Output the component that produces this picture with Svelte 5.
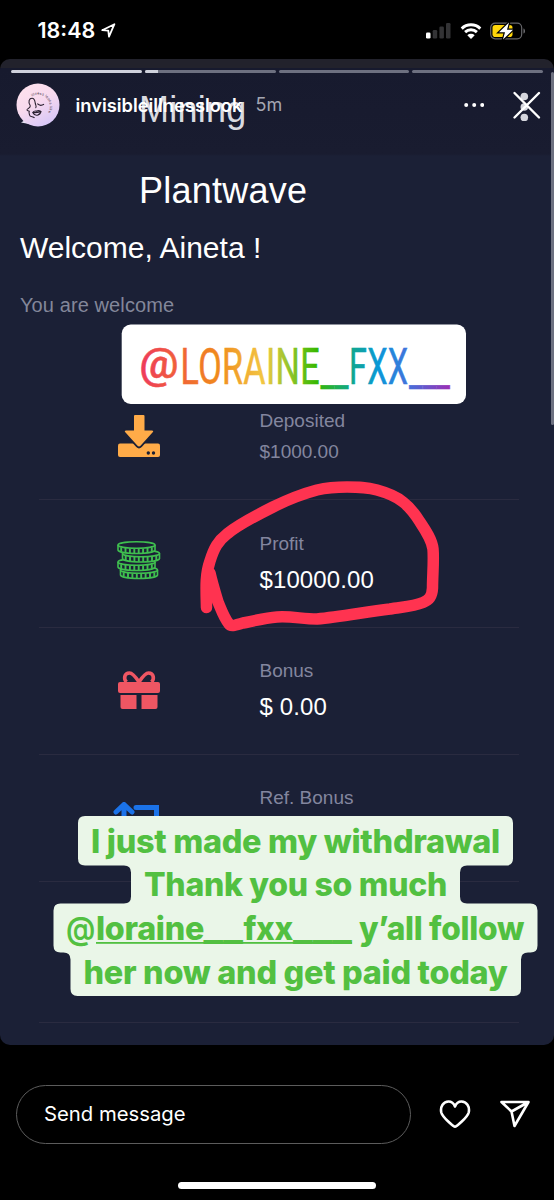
<script lang="ts">
    type Row = {
        icon: "deposit" | "coins" | "gift" | "referral" | "";
        label: string;
        amount: string;
        muted?: boolean;
    };

    const rows: Row[] = [
        { icon: "deposit", label: "Deposited", amount: "$1000.00", muted: true },
        { icon: "coins", label: "Profit", amount: "$10000.00" },
        { icon: "gift", label: "Bonus", amount: "$ 0.00" },
        { icon: "referral", label: "Ref. Bonus", amount: "" },
        { icon: "", label: "", amount: "" },
    ];

    const segments = [100, 10, 0, 0];

    // Bottom to top, each coin slightly shifted
    const stack = [
        { x: 3.5, y: 30 },
        { x: 1, y: 22 },
        { x: 5.5, y: 13.5 },
        { x: 1, y: 5 },
    ];

    const caption = [
        { text: "I just made my withdrawal", x: 91, y: 794, width: 409 },
        { text: "Thank you so much", x: 144, y: 837, width: 303 },
        { text: "her now and get paid today", x: 83.5, y: 924.5, width: 424 },
    ];
</script>

<div class="phone">
    <div class="status">
        <span class="time">18:48</span>
        <svg class="location" viewBox="0 0 15 15" width="15" height="15">
            <path d="M1.2 7.2 13.4 1.2 8 13.6 7.3 7.7Z" />
        </svg>
        <svg class="signal" viewBox="0 0 25 17" width="25" height="17">
            <rect x="0" y="10.5" width="4.5" height="6" rx="1.3" fill="#fff" />
            <rect x="6.7" y="8" width="4.5" height="8.5" rx="1.3" />
            <rect x="13.4" y="4.5" width="4.5" height="12" rx="1.3" />
            <rect x="20" y="1" width="4.5" height="15.5" rx="1.3" />
        </svg>
        <svg class="wifi" viewBox="0 0 22 16" width="22" height="16">
            <path d="M1.7 5.6A13.3 13.3 0 0 1 20.3 5.6" />
            <path d="M5.1 9.1A8.5 8.5 0 0 1 16.9 9.1" />
            <path class="dot" d="M7.3 12.2A5.5 5.5 0 0 1 14.7 12.2L11 16Z" />
        </svg>
        <svg class="battery" viewBox="0 0 36 18" width="36" height="18">
            <rect x=".7" y="1.2" width="31" height="15.6" rx="4.5" fill="none" stroke="#66666a" stroke-width="1.2" />
            <path d="M33.5 6.4C35.4 7 35.4 11 33.5 11.6Z" fill="#77777b" />
            <rect x="2.5" y="3" width="20" height="12" rx="2.8" fill="#ffd60a" />
            <path d="M19 0.5 9 10.2H15L13 17.5 23 7.8H17Z" fill="#fff" stroke="#000" stroke-width="2.4" paint-order="stroke" />
        </svg>
    </div>

    <div class="story">
        <div class="page">
            <div class="brand">
                <div>Mining</div>
                <div>Plantwave</div>
            </div>
            <h1>Welcome, Aineta !</h1>
            <p>You are welcome</p>

            <div class="card">
                {#each rows as row}
                    <div class="row" class:muted={row.muted}>
                        <div class="icon">
                            {#if row.icon === "deposit"}
                                <svg viewBox="0 0 42 44" width="42" height="44">
                                    <rect x="0" y="29.5" width="42" height="13.5" rx="2" fill="#ffab48" />
                                    <path
                                        d="M17 1H25.5Q26.5 1 26.5 2V16.5H34Q36 16.5 34.7 18.2L22.5 31.8Q21 33.3 19.5 31.8L7.3 18.2Q6 16.5 8 16.5H16V2Q16 1 17 1Z"
                                        fill="#ffab48"
                                        stroke="#1b2036"
                                        stroke-width="3.6"
                                        paint-order="stroke"
                                    />
                                    <circle cx="30.3" cy="39" r="1.7" fill="#1b2036" />
                                    <circle cx="35.5" cy="39" r="1.7" fill="#1b2036" />
                                </svg>
                            {:else if row.icon === "coins"}
                                <svg class="coins" viewBox="0 0 44 40" width="44" height="40">
                                    {#each stack as coin}
                                        <g transform="translate({coin.x} {coin.y})">
                                            <path d="M0 0V5C1 9.6 36 9.6 37 5V0" />
                                            <ellipse cx="18.5" cy="0" rx="18.5" ry="3.2" />
                                            <path class="ridges" d="M3.2 2.5V6.5M7.5 3V7.8M11.9 3.5V8M16.3 3.5V8.3M20.7 3.5V8.3M25.1 3.5V8M29.5 3V7.8M33.8 2.5V6.5" />
                                        </g>
                                    {/each}
                                </svg>
                            {:else if row.icon === "gift"}
                                <svg class="gift" viewBox="0 0 42 40" width="42" height="40">
                                    <g fill="#ef5663">
                                        <rect x="0" y="12" width="42" height="11" rx="2" />
                                        <path d="M2.5 25H18.5V39H4.5Q2.5 39 2.5 37Z" />
                                        <path d="M23.5 25H39.5V37Q39.5 39 37.5 39H23.5Z" />
                                    </g>
                                    <path
                                        d="M21 12C17 6 14.5 3 11.5 3 6 3 5.5 9 8.5 12M21 12C25 6 27.5 3 30.5 3 36 3 36.5 9 33.5 12"
                                        fill="none"
                                        stroke="#ef5663"
                                        stroke-width="3.6"
                                    />
                                </svg>
                            {:else if row.icon === "referral"}
                                <svg class="referral" viewBox="0 0 50 34" width="50" height="34">
                                    <path d="M3 10 11 2.5 19 10M11 4V28H28" />
                                    <path d="M23 5.5H43.5V28M35.5 23 43.5 30.5 49 24" />
                                </svg>
                            {/if}
                        </div>
                        <div class="text">
                            <div class="label">{row.label}</div>
                            <div class="amount">{row.amount}</div>
                        </div>
                    </div>
                {/each}
            </div>
        </div>

        <div class="scrollbar"></div>

        <!-- Stickers and drawing placed on the story canvas -->
        <svg class="stickers" viewBox="0 0 554 986" width="554" height="986">
            <defs>
                <linearGradient id="rainbow" gradientUnits="userSpaceOnUse" x1="140" y1="0" x2="450" y2="0">
                    <stop offset="0" stop-color="#ee3a5c" />
                    <stop offset=".12" stop-color="#f0603a" />
                    <stop offset=".25" stop-color="#f08a1c" />
                    <stop offset=".4" stop-color="#f2c744" />
                    <stop offset=".48" stop-color="#94c52c" />
                    <stop offset=".57" stop-color="#38b800" />
                    <stop offset=".67" stop-color="#12a982" />
                    <stop offset=".77" stop-color="#0a98d8" />
                    <stop offset=".86" stop-color="#4173dc" />
                    <stop offset="1" stop-color="#9c2fb4" />
                </linearGradient>
            </defs>

            <path
                class="drawing"
                d="M206.500 548.500C206 530 205 516 210 502C214 489 218 482 227 475C239 465 257 456 273 448C289 440 302 435 317 431C330 428 337 428 347 428C359 428 366 428 377 431C388 434 396 437 403 443C411 449 415 455 420 463C426 472 432 481 433 490C434 502 432.500 516 432.500 529C432 538 429 541 423 543.500C412 548 400 548 390 550C365 553 340 558 317 560C302 560 292 557 277 558C265 559 253 562 243 564C236 566 231 568 229 565C224 559 221 550 218 543C215 533 212 523 210 514"
            />

            <rect x="121.700" y="265.500" width="344.300" height="79.500" rx="9" fill="#fff" />
            <g class="mention" fill="url(#rainbow)">
                <text class="sign" x="139.500" y="319" textLength="39" lengthAdjust="spacingAndGlyphs">@</text>
                <text x="180.500" y="325" textLength="139.500" lengthAdjust="spacingAndGlyphs">LORAINE</text>
                <text class="blank" x="320.500" y="326" textLength="28" lengthAdjust="spacingAndGlyphs">__</text>
                <text x="349" y="325" textLength="59.500" lengthAdjust="spacingAndGlyphs">FXX</text>
                <text class="blank" x="409" y="326" textLength="41" lengthAdjust="spacingAndGlyphs">___</text>
            </g>

            <path
                class="bubble"
                d="M85 757H506Q513 757 513 764V799.500Q513 806.500 506 806.500H467Q460 806.500 460 813.500V837.500Q460 844.500 467 844.500H530.500Q537.500 844.500 537.500 851.500V886.500Q537.500 893.500 530.500 893.500H528Q521 893.500 521 900.500V930Q521 937 514 937H77.500Q70.500 937 70.500 930V900.500Q70.500 893.500 63.500 893.500H60.500Q53.500 893.500 53.500 886.500V851.500Q53.500 844.500 60.500 844.500H124Q131 844.500 131 837.500V813.500Q131 806.500 124 806.500H85Q78 806.500 78 799.500V764Q78 757 85 757Z"
            />
            <g class="caption">
                {#each caption as line}
                    <text x={line.x} y={line.y} textLength={line.width} lengthAdjust="spacingAndGlyphs">{line.text}</text>
                {/each}
                <text class="at" x="66" y="881" textLength="29" lengthAdjust="spacingAndGlyphs">@</text>
                <text x="96" y="881" textLength="108" lengthAdjust="spacingAndGlyphs">loraine</text>
                <text class="blank" x="203.500" y="881" textLength="39.500" lengthAdjust="spacingAndGlyphs">__</text>
                <text x="243.500" y="881" textLength="49.500" lengthAdjust="spacingAndGlyphs">fxx</text>
                <text class="blank" x="293" y="881" textLength="59" lengthAdjust="spacingAndGlyphs">___</text>
                <text x="359" y="881" textLength="165" lengthAdjust="spacingAndGlyphs">y’all follow</text>
                <rect x="96" y="883" width="256" height="1.800" />
            </g>
        </svg>

        <div class="chrome">
            <div class="progress">
                {#each segments as value}
                    <div class="segment"><div style="width: {value}%"></div></div>
                {/each}
            </div>
            <div class="author">
                <svg class="avatar" viewBox="0 0 44 44" width="44" height="44">
                    <defs>
                        <linearGradient id="pink" x1="0" y1="0" x2=".6" y2="1">
                            <stop offset="0" stop-color="#ffe3ec" />
                            <stop offset=".55" stop-color="#f7d9ee" />
                            <stop offset="1" stop-color="#d9c8f7" />
                        </linearGradient>
                        <path id="ring" d="M16 13.500A11.500 11.500 0 1 1 24 34.500" />
                    </defs>
                    <path d="M5 39.500 11 36 13 41Z" fill="#e8e4f4" />
                    <circle cx="22" cy="22" r="21.500" fill="url(#pink)" />
                    <path
                        class="face"
                        d="M14.300 22.700C11.500 18.500 13.500 15.300 16 15.300C19 15.300 19 19 19.300 20.500C20 23 21 24 19.500 25M14.300 22.700C14.500 25 10.700 26 11 27C11.500 28 13.300 28 13.300 28.300C12.500 30 13.500 30.500 13.500 32C14 34.500 17.500 33 18.500 35M16.700 29.500C18.500 27 20 28.500 21 28C22.500 27 24 28 25 28.500C24 32.500 19 34 16.700 29.500ZM16.700 29.500C20 30 22 29.500 25 28.500M21.300 20.700C23 22.500 26 22.500 28 21.300"
                    />
                    <text class="ring"><textPath href="#ring">illness looks like</textPath></text>
                </svg>
                <span class="name">invisibleillnesslook</span>
                <span class="age">5m</span>
                <svg class="more" viewBox="0 0 20 6" width="20" height="6">
                    <circle cx="2.200" cy="3" r="2" />
                    <circle cx="10.200" cy="3" r="2" />
                    <circle cx="18.200" cy="3" r="2" />
                </svg>
                <svg class="close" viewBox="0 0 30 32" width="30" height="32">
                    <circle cx="12.300" cy="7.500" r="3.800" />
                    <circle cx="12.300" cy="18" r="3.800" />
                    <circle cx="12.300" cy="28.500" r="3.800" />
                    <path d="M2.500 4 27 28.500M27 4 2.500 28.500" />
                </svg>
            </div>
        </div>
    </div>

    <div class="reply">
        <div class="input">Send message</div>
        <svg class="heart" viewBox="0 0 32 30" width="32" height="30">
            <path d="M16 27.800C15 27.800 3.500 18.500 2.300 13.500C1 7.500 4.500 2.500 9.500 2.500C13 2.500 15 5 16 7.500C17 5 19 2.500 22.500 2.500C27.500 2.500 31 7.500 29.700 13.500C28.500 18.500 17 27.800 16 27.800Z" />
        </svg>
        <svg class="send" viewBox="0 0 32 30" width="32" height="30">
            <path d="M2.500 3H29.500L15.500 27 12.500 12.500ZM12.500 12.500 29.500 3" />
        </svg>
    </div>
    <div class="home"></div>
</div>

<style>
    :global(body) {
        margin: 0;
        background: #000;
    }

    .phone {
        display: flex;
        flex-direction: column;
        width: 554px;
        height: 1200px;
        overflow: hidden;
        background: #000;
        color: #fff;
        font-family: Inter, "Liberation Sans", sans-serif;
    }

    .status {
        display: flex;
        align-items: center;
        height: 59px;
        padding: 2px 28px 0 37.5px;
        box-sizing: border-box;
    }

    .time {
        width: 59px;
        padding-bottom: 2px;
        font-size: 21.5px;
        font-weight: 600;
        white-space: nowrap;
    }

    .location {
        margin: 0 auto 1px 4px;
        fill: none;
        stroke: #fff;
        stroke-width: 1.8;
        stroke-linejoin: round;
    }

    .signal {
        margin-right: 9px;
        fill: #333335;
    }

    .wifi {
        margin-right: 8px;
        fill: none;
        stroke: #fff;
        stroke-width: 2.9;
    }

    .wifi .dot {
        fill: #fff;
        stroke: none;
    }

    .story {
        position: relative;
        height: 986px;
        overflow: hidden;
        border-radius: 10px;
        background: #1a1e34;
    }

    .page {
        height: 986px;
        padding: 10px 13px 0 20px;
        box-sizing: border-box;
        background: linear-gradient(#22222c 9px, #171a2e 9px, #191c30 95px, #1b2036 97px);
        font-family: "Liberation Sans", Arial, sans-serif;
    }

    .brand {
        padding-left: 119px;
        font-size: 36px;
        letter-spacing: .25px;
        line-height: 81px;
    }

    .brand div:first-child {
        color: #d9dae0;
    }

    h1 {
        margin: 0;
        font-size: 30px;
        font-weight: 400;
        line-height: 34px;
    }

    p {
        margin: 0;
        padding: 24px 0 22px;
        color: #83879a;
        font-size: 20px;
        letter-spacing: .1px;
        line-height: 32px;
    }

    .card {
        padding: 29px 22px 0 19px;
        background: #1b2036;
    }

    .row {
        display: grid;
        grid-template-columns: 200px 1fr;
        height: 127.4px;
        box-sizing: border-box;
        border-bottom: 1px solid #2a2b40;
    }

    .row:first-child {
        height: 128.2px;
    }

    .row:last-child {
        height: 141px;
    }

    .icon {
        display: flex;
        align-items: center;
        justify-content: center;
    }

    .coins {
        margin-top: -6px;
        fill: #1b2036;
        stroke: #3fbf4f;
        stroke-width: 1.6;
    }

    .coins .ridges {
        stroke-width: 1.9;
    }

    .gift {
        margin-top: -2px;
    }

    .referral {
        margin: 2px 0 0 -2px;
        fill: none;
        stroke: #1b72e8;
        stroke-width: 5;
        stroke-linecap: round;
    }

    .text {
        padding: 28.5px 0 0 20.5px;
    }

    .label {
        color: #83869f;
        font-size: 19px;
        line-height: 30px;
    }

    .amount {
        font-size: 24px;
        letter-spacing: .1px;
        line-height: 42px;
    }

    .muted .text {
        padding-top: 34px;
    }

    .muted .amount {
        color: #83869f;
        font-size: 19px;
        letter-spacing: 0;
        line-height: 32px;
    }

    .scrollbar {
        position: absolute;
        top: 13px;
        right: 0;
        width: 3px;
        height: 353px;
        border-radius: 2px;
        background: #6d7080;
    }

    .stickers {
        position: absolute;
        inset: 0;
    }

    .drawing {
        fill: none;
        stroke: #ff3350;
        stroke-width: 11.5;
        stroke-linecap: round;
        stroke-linejoin: round;
    }

    .mention {
        font-family: Roboto, sans-serif;
        font-size: 50px;
        font-weight: 400;
        letter-spacing: .5px;
        stroke: url(#rainbow);
        stroke-width: .5;
    }

    .mention .sign {
        font-size: 42px;
        font-weight: 500;
        letter-spacing: 0;
    }

    .mention .blank {
        letter-spacing: 0;
    }

    .bubble {
        fill: #eaf6e8;
    }

    .caption {
        fill: #52c041;
        font-size: 32px;
        font-weight: 800;
        letter-spacing: -.3px;
    }

    .caption .at {
        font-weight: 600;
    }

    .caption .blank {
        letter-spacing: 0;
    }

    .chrome {
        position: absolute;
        inset: 0 0 auto;
        padding: 11px 11px 0;
    }

    .progress {
        display: flex;
        gap: 3px;
    }

    .segment {
        flex: 1;
        height: 3px;
        overflow: hidden;
        border-radius: 2px;
        background: #6d7080;
    }

    .segment div {
        height: 3px;
        background: #cfd1dc;
    }

    .author {
        display: flex;
        align-items: center;
        padding: 9.5px 0 0 5px;
    }

    .avatar .face {
        fill: none;
        stroke: #2a2030;
        stroke-width: 1.1;
    }

    .avatar .ring {
        fill: #3a3040;
        font-size: 3.6px;
        letter-spacing: .2px;
    }

    .name {
        width: 169px;
        margin-left: 15.5px;
        font-size: 18.3px;
        font-weight: 600;
        white-space: nowrap;
    }

    .age {
        margin: 0 auto 0 11px;
        color: #a4a6b2;
        font-size: 18px;
    }

    .more {
        margin-right: 28px;
        fill: #fff;
    }

    .close {
        margin-right: 1px;
        fill: #d5d6dd;
        stroke-linecap: round;
    }

    .close path {
        stroke: #fff;
        stroke-width: 2.4;
    }

    .reply {
        display: flex;
        align-items: center;
        padding: 40px 23px 0 16px;
    }

    .input {
        width: 395px;
        height: 59px;
        padding-left: 27px;
        box-sizing: border-box;
        border: 1.5px solid #5c5c5c;
        border-radius: 30px;
        font-size: 20.3px;
        line-height: 55px;
    }

    .heart,
    .send {
        margin: 0 0 2px 28px;
        fill: none;
        stroke: #fff;
        stroke-width: 2.6;
        stroke-linejoin: round;
    }

    .home {
        width: 198px;
        height: 7px;
        margin: 38px auto 0;
        border-radius: 4px;
        background: #fff;
    }
</style>
